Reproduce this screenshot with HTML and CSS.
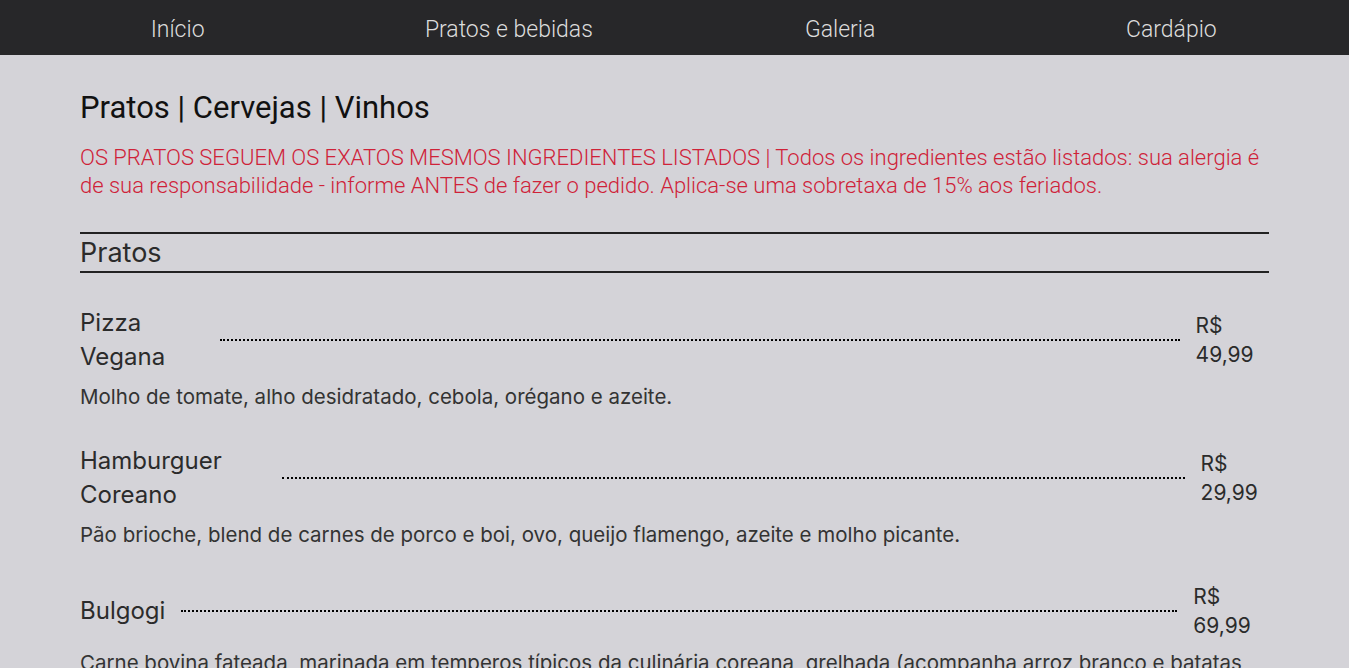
FILE: index.html
```html
<!DOCTYPE html>
<html lang="pt-BR">
<head>
<meta charset="utf-8">
<title>Cardápio</title>
<link rel="stylesheet" href="styles.css">
</head>
<body>
<nav class="topnav">
  <a class="nav-link" href="#">Início</a>
  <a class="nav-link" href="#">Pratos e bebidas</a>
  <a class="nav-link" href="#">Galeria</a>
  <a class="nav-link" href="#">Cardápio</a>
</nav>
<main class="menu">
  <h1 class="menu-title">Pratos | Cervejas | Vinhos</h1>
  <p class="notice">OS PRATOS SEGUEM OS EXATOS MESMOS INGREDIENTES LISTADOS | Todos os ingredientes estão listados: sua alergia é de sua responsabilidade - informe ANTES de fazer o pedido. Aplica-se uma sobretaxa de 15% aos feriados.</p>
  <section class="menu-section">
    <h2 class="section-title">Pratos</h2>
    <article class="dish">
      <div class="dish-row">
        <h3 class="dish-name">Pizza Vegana</h3>
        <div class="dish-line"></div>
        <p class="dish-price">R$ 49,99</p>
      </div>
      <p class="dish-desc">Molho de tomate, alho desidratado, cebola, orégano e azeite.</p>
    </article>
    <article class="dish">
      <div class="dish-row">
        <h3 class="dish-name">Hamburguer Coreano</h3>
        <div class="dish-line"></div>
        <p class="dish-price">R$ 29,99</p>
      </div>
      <p class="dish-desc">Pão brioche, blend de carnes de porco e boi, ovo, queijo flamengo, azeite e molho picante.</p>
    </article>
    <article class="dish">
      <div class="dish-row">
        <h3 class="dish-name">Bulgogi</h3>
        <div class="dish-line"></div>
        <p class="dish-price">R$ 69,99</p>
      </div>
      <p class="dish-desc">Carne bovina fateada, marinada em temperos típicos da culinária coreana, grelhada (acompanha arroz branco e batatas fritas).</p>
    </article>
  </section>
</main>
</body>
</html>
```

FILE: styles.css
```css
* { box-sizing: border-box; }

body {
  margin: 0;
  background: #d4d3d8;
  font-family: Inter, Lato, sans-serif;
  color: #2b2b2b;
}

.topnav {
  height: 55px;
  background: #272729;
  display: grid;
  grid-template-columns: repeat(4, 1fr);
  align-items: center;
  justify-items: center;
  padding: 3px 12px 0;
}

.nav-link {
  font-family: Roboto, sans-serif;
  font-weight: 300;
  font-size: 23px;
  color: #dcdcdc;
  text-decoration: none;
}

.menu {
  padding: 0 80px;
}

.menu-title {
  font-family: Roboto, sans-serif;
  font-weight: 400;
  font-size: 31px;
  line-height: 36px;
  color: #111;
  margin: 35px 0 0;
}

.notice {
  font-family: Roboto, sans-serif;
  font-weight: 300;
  font-size: 22px;
  line-height: 28px;
  color: #cf2238;
  margin: 18px 0 0;
}

.menu-section {
  margin-top: 32px;
}

.section-title {
  font-size: 27px;
  font-weight: 400;
  line-height: 37px;
  margin: 0;
  border-top: 2px solid #222;
  border-bottom: 2px solid #222;
  color: #2b2b2b;
}

.dish {
  margin-top: 33px;
}

.dish-row {
  display: flex;
  align-items: center;
}

.dish-name {
  font-size: 24px;
  font-weight: 400;
  line-height: 34px;
  margin: 0;
}

.dish-line {
  width: 100%;
  border-bottom: 2px dotted #000;
  margin: 0 16px;
}

.dish-price {
  font-size: 21px;
  line-height: 29px;
  margin: 0;
}

.dish-desc {
  font-size: 20.5px;
  line-height: 28px;
  margin: 9px 0 0;
  color: #333;
}
```
